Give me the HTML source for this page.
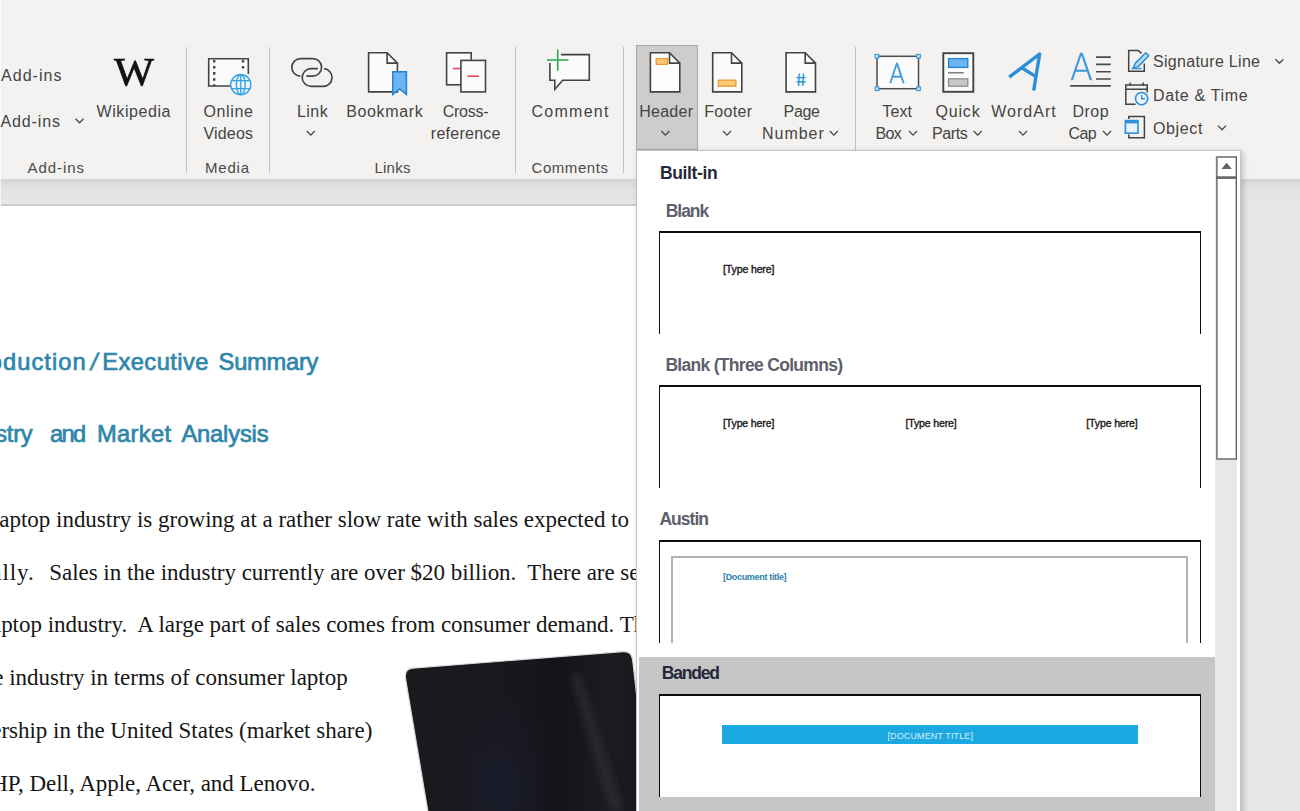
<!DOCTYPE html>
<html lang="en">
<head>
<meta charset="utf-8">
<title>Word - Insert Header</title>
<style>
html,body{margin:0;padding:0}
body{width:1300px;height:811px;overflow:hidden;background:#fff;position:relative;font-family:"Liberation Sans",Arial,sans-serif}
.t{position:absolute;white-space:pre;display:block;margin:0;padding:0;font-weight:400}
.dj{font-family:"DejaVu Sans","Liberation Sans",sans-serif;font-weight:200}
.sf{font-family:"Liberation Serif","Times New Roman",serif}
#ribbon{position:absolute;left:0;top:0;width:1300px;height:179px;background:#f3f2f1}
#ribbon .edge{position:absolute;left:0;top:0;width:1px;height:179px;background:#fbfbfb}
#rshadow{position:absolute;left:0;top:179px;width:1300px;height:27px;background:linear-gradient(#d3d3d3 0,#dcdcdc 4px,#e4e4e4 10px,#e6e6e6 24px,#e6e6e6 27px)}
#rshadow b{position:absolute;left:0;top:0;width:1px;height:27px;background:#f4f4f4}
#rshadow i{position:absolute;left:0;top:25.3px;width:1238px;height:1.7px;background:#cdcdcd}
#work{position:absolute;left:0;top:206px;width:1300px;height:605px;background:#e6e6e6}
#page{position:absolute;left:0;top:0;width:1236px;height:605px;background:#fff;overflow:hidden}
.sep{position:absolute;top:47px;width:1.4px;height:126px;background:#c3c1bf}
#hdrbtn{position:absolute;left:636px;top:45px;width:62px;height:105px;box-sizing:border-box;background:#cecdcc;border:1px solid #a9a8a7}
svg{position:absolute;left:0;top:0;overflow:visible}
#menu{position:absolute;left:636px;top:150px;width:605px;height:670px;box-sizing:border-box;background:#fff;border:1px solid #c4c4c4;box-shadow:2px 2px 6px rgba(0,0,0,.22)}
#menu .hl{position:absolute;left:1.5px;top:505.5px;width:576px;height:160px;background:#c6c6c6}
#menu .track{position:absolute;left:577.5px;top:5px;width:22.5px;height:660px;background:#e8e8e8}
.thumb{position:absolute;left:22px;width:542px;height:103px;box-sizing:border-box;background:#fff;border:1px solid #0c0c0c;border-top-width:2px;border-bottom:0}
.thumb .inner{position:absolute;left:11px;top:14px;width:517px;height:87px;box-sizing:border-box;border:2px solid #b4b4b4;border-bottom:0}
.thumb .band{position:absolute;left:62px;top:29.4px;width:416.2px;height:18.4px;background:#1ca9e1}
</style>
</head>
<body>
<div id="work"><div id="page">
<h2 class="t hd" style="left:0;top:124.5px;width:400px;height:60px"><span class="t" style="left:-49.54px;top:16.79px;font-size:23.7px;line-height:30px;letter-spacing:1.028px;color:#2f86ab;-webkit-text-stroke:0.7px #2f86ab;">Introduction</span><span class="t" style="left:89.60px;top:16.79px;font-size:23.7px;line-height:30px;letter-spacing:0.000px;color:#2f86ab;-webkit-text-stroke:0.7px #2f86ab;transform:skewX(-11deg);transform-origin:0 70%;">/</span><span class="t" style="left:102.30px;top:16.79px;font-size:23.7px;line-height:30px;letter-spacing:0.420px;color:#2f86ab;-webkit-text-stroke:0.7px #2f86ab;">Executive</span> <span class="t" style="left:218.60px;top:16.79px;font-size:23.7px;line-height:30px;letter-spacing:-0.246px;color:#2f86ab;-webkit-text-stroke:0.7px #2f86ab;">Summary</span></h2>
<h2 class="t hd" style="left:0;top:196.5px;width:400px;height:60px"><span class="t" style="left:-49.59px;top:16.79px;font-size:23.7px;line-height:30px;letter-spacing:-0.303px;color:#2f86ab;-webkit-text-stroke:0.7px #2f86ab;">Industry</span> <span class="t" style="left:49.90px;top:16.79px;font-size:23.7px;line-height:30px;letter-spacing:-1.560px;color:#2f86ab;-webkit-text-stroke:0.7px #2f86ab;">and</span> <span class="t" style="left:97.00px;top:16.79px;font-size:23.7px;line-height:30px;letter-spacing:0.359px;color:#2f86ab;-webkit-text-stroke:0.7px #2f86ab;">Market</span> <span class="t" style="left:181.40px;top:16.79px;font-size:23.7px;line-height:30px;letter-spacing:-0.146px;color:#2f86ab;-webkit-text-stroke:0.7px #2f86ab;">Analysis</span></h2>
<p class="t bd sf" style="left:-48.50px;top:298.74px;font-size:23px;line-height:29px;letter-spacing:-0.020px;color:#161616;">The laptop industry is growing at a rather slow rate with sales expected to</p>
<p class="t bd sf" style="left:-56.87px;top:351.74px;font-size:23px;line-height:29px;letter-spacing:0.880px;color:#161616;">annually.</p>
<p class="t bd sf" style="left:49.20px;top:351.74px;font-size:23px;line-height:29px;letter-spacing:-0.020px;color:#161616;">Sales in the industry currently are over $20 billion.  There are several segments</p>
<p class="t bd sf" style="left:-49.20px;top:404.04px;font-size:23px;line-height:29px;letter-spacing:-0.020px;color:#161616;">the laptop industry.  A large part of sales comes from consumer demand. The top five brands</p>
<p class="t bd sf" style="left:-24.59px;top:457.34px;font-size:23px;line-height:29px;letter-spacing:-0.020px;color:#161616;">the industry in terms of consumer laptop</p>
<p class="t bd sf" style="left:-48.36px;top:510.34px;font-size:23px;line-height:29px;letter-spacing:-0.020px;color:#161616;">ownership in the United States (market share)</p>
<p class="t bd sf" style="left:-42.55px;top:563.24px;font-size:23px;line-height:29px;letter-spacing:-0.020px;color:#161616;">are HP, Dell, Apple, Acer, and Lenovo.</p>
<svg width="1300" height="605" viewBox="0 206 1300 605" aria-label="Laptop"><defs><linearGradient id="lg" x1="0" y1="0" x2="1" y2="0"><stop offset="0" stop-color="#1b1a1e"/><stop offset=".45" stop-color="#17171d"/><stop offset=".62" stop-color="#131318"/><stop offset=".8" stop-color="#1d1b21"/><stop offset="1" stop-color="#19181c"/></linearGradient><radialGradient id="rg"><stop offset="0" stop-color="#1b1d30" stop-opacity=".75"/><stop offset="1" stop-color="#1b1d30" stop-opacity="0"/></radialGradient><filter id="bl" x="-50%" y="-20%" width="200%" height="140%"><feGaussianBlur stdDeviation="3"/></filter></defs><path d="M412.5,668.2 L623,651.6 Q631.5,651 632.6,659.5 L652,830 L431,830 L405.6,679 Q404,669 412.5,668.2 Z" fill="url(#lg)" stroke="#d9d9dc" stroke-width="1.2"/><path d="M580,672 L624,811 L610,811 L570,676 Z" fill="#302d39" opacity=".6" filter="url(#bl)"/><ellipse cx="500" cy="785" rx="55" ry="95" fill="url(#rg)"/></svg>
</div></div>
<div id="ribbon"><div class="edge"></div>
<div class="sep" style="left:185.6px"></div>
<div class="sep" style="left:268.9px"></div>
<div class="sep" style="left:515px"></div>
<div class="sep" style="left:622.9px"></div>
<div class="sep" style="left:854.8px"></div>
<div id="hdrbtn"></div>
<svg width="1300" height="180" viewBox="0 0 1300 180">
<path d="M75.5,118.7 L79.5,122.8 L83.5,118.7" fill="none" stroke="#4a4a4a" stroke-width="1.35"/>
<path d="M306.8,131.0 L310.8,135.1 L314.8,131.0" fill="none" stroke="#4a4a4a" stroke-width="1.35"/>
<path d="M661.4,131.0 L665.4,135.1 L669.4,131.0" fill="none" stroke="#4a4a4a" stroke-width="1.35"/>
<path d="M723.0,131.0 L727.0,135.1 L731.0,131.0" fill="none" stroke="#4a4a4a" stroke-width="1.35"/>
<path d="M829.8,131.0 L833.8,135.1 L837.8,131.0" fill="none" stroke="#4a4a4a" stroke-width="1.35"/>
<path d="M909.0,131.0 L913.0,135.1 L917.0,131.0" fill="none" stroke="#4a4a4a" stroke-width="1.35"/>
<path d="M973.7,131.0 L977.7,135.1 L981.7,131.0" fill="none" stroke="#4a4a4a" stroke-width="1.35"/>
<path d="M1019.0,131.0 L1023.0,135.1 L1027.0,131.0" fill="none" stroke="#4a4a4a" stroke-width="1.35"/>
<path d="M1103.0,131.0 L1107.0,135.1 L1111.0,131.0" fill="none" stroke="#4a4a4a" stroke-width="1.35"/>
<path d="M1275.4,59.2 L1279.4,63.3 L1283.4,59.2" fill="none" stroke="#4a4a4a" stroke-width="1.35"/>
<path d="M1218.0,125.6 L1222.0,129.7 L1226.0,125.6" fill="none" stroke="#4a4a4a" stroke-width="1.35"/>
<path d="M232,86 H208.7 V58.7 H248.3 V74" fill="#fbfbfb" stroke="#434343" stroke-width="1.6"/>
<path d="M214.2,58.7 V86" stroke="#434343" stroke-width="2.4" stroke-dasharray="2.6 3.5" stroke-dashoffset="-1.2" fill="none"/>
<path d="M243,58.7 V72" stroke="#434343" stroke-width="2.4" stroke-dasharray="2.6 3.5" stroke-dashoffset="-1.2" fill="none"/>
<g fill="none" stroke="#37a2e2" stroke-width="1.35"><circle cx="240.8" cy="84.6" r="10.1" fill="#e9f5fd"/><ellipse cx="240.8" cy="84.6" rx="4.4" ry="10"/><path d="M240.8,74.6 V94.6 M231.6,80.6 H250 M231.6,88.6 H250"/></g>
<g fill="none" stroke="#434343" stroke-width="1.6"><path d="M300.4,76.1 A8.75,8.75 0 0 1 300.65,58.6 H312.85 A8.75,8.75 0 0 1 312.85,76.1 H306.4"/><path d="M317.9,68.6 H311.1 A8.9,8.9 0 0 0 311.1,86.4 H323.3 A8.9,8.9 0 0 0 324.1,68.65"/></g>
<path d="M368.6,52.8 H387.09999999999997 L397.4,63.099999999999994 V91.9 H368.6 Z" fill="#fbfbfb" stroke="#434343" stroke-width="1.6" stroke-linejoin="miter"/><path d="M387.09999999999997,52.8 V63.099999999999994 H397.4" fill="none" stroke="#434343" stroke-width="1.6"/>
<path d="M392.8,71.8 H406.4 V94.4 L399.6,89 L392.8,94.4 Z" fill="#6db5f2" stroke="#1f82d4" stroke-width="1.5"/>
<rect x="446.6" y="52.8" width="24.6" height="32" fill="#fbfbfb" stroke="#434343" stroke-width="1.6"/>
<path d="M452.8,68.5 H460" stroke="#dc4b68" stroke-width="1.6"/>
<rect x="460.9" y="60.4" width="24.6" height="31.5" fill="#fbfbfb" stroke="#434343" stroke-width="1.6"/>
<path d="M467.4,76.2 H479" stroke="#dc4b68" stroke-width="1.6"/>
<path d="M561,54.6 H589.3 V80.3 H562.6 L554.8,89.4 V80.3 H549.9 V63" fill="#fbfbfb" stroke="#434343" stroke-width="1.6"/>
<path d="M547,60 H568.5 M557.7,49.5 V70.8" stroke="#2fa853" stroke-width="1.6" fill="none"/>
<path d="M650.4,52.8 H669.5 L679.8,63.099999999999994 V91.9 H650.4 Z" fill="#fdfdfd" stroke="#434343" stroke-width="1.6" stroke-linejoin="miter"/><path d="M669.5,52.8 V63.099999999999994 H679.8" fill="none" stroke="#434343" stroke-width="1.6"/>
<rect x="656.2" y="58.6" width="11.3" height="5.8" fill="#fbc976" stroke="#ea9a35" stroke-width="1.3"/>
<path d="M712.7,52.8 H731.5 L741.8,63.099999999999994 V91.9 H712.7 Z" fill="#fbfbfb" stroke="#434343" stroke-width="1.6" stroke-linejoin="miter"/><path d="M731.5,52.8 V63.099999999999994 H741.8" fill="none" stroke="#434343" stroke-width="1.6"/>
<rect x="718.3" y="80.2" width="17.6" height="6" fill="#fbc976" stroke="#ea9a35" stroke-width="1.3"/>
<path d="M786.1,52.8 H805.2 L815.5,63.099999999999994 V91.9 H786.1 Z" fill="#fbfbfb" stroke="#434343" stroke-width="1.6" stroke-linejoin="miter"/><path d="M805.2,52.8 V63.099999999999994 H815.5" fill="none" stroke="#434343" stroke-width="1.6"/>
<rect x="877" y="56.3" width="41.5" height="32.4" fill="#fbfbfb" stroke="#4c4c4c" stroke-width="1.5"/>
<rect x="875.2" y="54.5" width="3.6" height="3.6" fill="#cfe8fb" stroke="#3a97dc" stroke-width="1.2"/>
<rect x="916.7" y="54.5" width="3.6" height="3.6" fill="#cfe8fb" stroke="#3a97dc" stroke-width="1.2"/>
<rect x="875.2" y="86.9" width="3.6" height="3.6" fill="#cfe8fb" stroke="#3a97dc" stroke-width="1.2"/>
<rect x="916.7" y="86.9" width="3.6" height="3.6" fill="#cfe8fb" stroke="#3a97dc" stroke-width="1.2"/>
<rect x="943.3" y="53.2" width="30" height="38.6" fill="#fbfbfb" stroke="#434343" stroke-width="1.9"/>
<rect x="948.6" y="58.6" width="19.2" height="8.8" fill="#6db5f2" stroke="#1f82d4" stroke-width="1.3"/>
<path d="M948,72.8 H963.8" stroke="#6a6a6a" stroke-width="1.3"/>
<rect x="948.6" y="78.8" width="19.2" height="7.4" fill="#c9c9c9" stroke="#8c8c8c" stroke-width="1.3"/>
<path d="M1009.2,77.2 L1039.6,54 L1033.7,90.6 M1021.6,67.8 L1036,76.6" fill="none" stroke="#2b8fd6" stroke-width="3.4" stroke-linecap="butt" stroke-linejoin="round"/>
<path d="M1096,57.1 H1110.8 M1096,64.4 H1110.8 M1096,71.8 H1110.8 M1096,79 H1110.8 M1070.2,85.9 H1110.8" stroke="#4a4a4a" stroke-width="1.6" fill="none"/>
<path d="M1144.3,63.5 V71.3 H1128.7 V50.4 H1138.2 L1141.4,53.4" fill="none" stroke="#434343" stroke-width="1.5"/>
<path d="M1145.8,52.8 L1148.8,55.8 L1138.4,66.4 L1133.2,68.4 L1135.2,63.4 Z" fill="#bcdcf6" stroke="#2b8fd6" stroke-width="1.5" stroke-linejoin="round"/>
<path d="M1131.4,68.5 H1141.6" stroke="#2b8fd6" stroke-width="1.4"/>
<path d="M1135.6,104.2 H1125.8 V85 H1147.2 V92.4" fill="none" stroke="#434343" stroke-width="1.5"/><path d="M1125.8,89.3 H1147.2 M1130.2,82.6 V86 M1143.2,82.6 V86" stroke="#434343" stroke-width="1.5" fill="none"/>
<circle cx="1141.6" cy="98.6" r="6.1" fill="#f1f8fd" stroke="#2b8fd6" stroke-width="1.6"/><path d="M1141.6,95 V98.8 H1144.8" fill="none" stroke="#2b8fd6" stroke-width="1.4"/>
<path d="M1128.8,119 V116.6 H1144.4 V137.8 H1128.8 V134.4" fill="none" stroke="#434343" stroke-width="1.5"/>
<rect x="1125.4" y="120.6" width="12.6" height="12.6" fill="#e6f2fc" stroke="#2b8fd6" stroke-width="1.6"/><path d="M1125.4,122.2 H1138" stroke="#2b8fd6" stroke-width="2.3"/>
</svg>
<span class="t" style="left:1.00px;top:65.86px;font-size:16px;line-height:20px;letter-spacing:1.043px;color:#444;">Add-ins</span>
<span class="t" style="left:0.50px;top:112.06px;font-size:16px;line-height:20px;letter-spacing:0.877px;color:#444;">Add-ins</span>
<span class="t sf" style="left:113.50px;top:47.04px;font-size:39.6px;line-height:50px;letter-spacing:0.000px;color:#111;transform:scaleX(1.07);transform-origin:0 0;-webkit-text-stroke:.7px #111;">W</span>
<span class="t" style="left:96.50px;top:101.56px;font-size:16px;line-height:20px;letter-spacing:0.575px;color:#444;">Wikipedia</span>
<span class="t" style="left:27.50px;top:157.90px;font-size:15px;line-height:19px;letter-spacing:0.942px;color:#4a4a4a;">Add-ins</span>
<span class="t" style="left:205.00px;top:157.90px;font-size:15px;line-height:19px;letter-spacing:0.781px;color:#4a4a4a;">Media</span>
<span class="t" style="left:374.50px;top:157.90px;font-size:15px;line-height:19px;letter-spacing:0.219px;color:#4a4a4a;">Links</span>
<span class="t" style="left:531.50px;top:157.90px;font-size:15px;line-height:19px;letter-spacing:0.568px;color:#4a4a4a;">Comments</span>
<span class="t" style="left:203.40px;top:101.56px;font-size:16px;line-height:20px;letter-spacing:0.672px;color:#444;">Online</span>
<span class="t" style="left:203.50px;top:124.26px;font-size:16px;line-height:20px;letter-spacing:0.172px;color:#444;">Videos</span>
<span class="t" style="left:297.00px;top:101.56px;font-size:16px;line-height:20px;letter-spacing:0.433px;color:#444;">Link</span>
<span class="t" style="left:346.20px;top:101.56px;font-size:16px;line-height:20px;letter-spacing:0.646px;color:#444;">Bookmark</span>
<span class="t" style="left:442.80px;top:101.56px;font-size:16px;line-height:20px;letter-spacing:-0.284px;color:#444;">Cross-</span>
<span class="t" style="left:430.80px;top:124.26px;font-size:16px;line-height:20px;letter-spacing:0.262px;color:#444;">reference</span>
<span class="t" style="left:531.50px;top:101.56px;font-size:16px;line-height:20px;letter-spacing:1.273px;color:#444;">Comment</span>
<span class="t" style="left:639.20px;top:101.56px;font-size:16px;line-height:20px;letter-spacing:0.264px;color:#444;">Header</span>
<span class="t" style="left:704.20px;top:101.56px;font-size:16px;line-height:20px;letter-spacing:0.312px;color:#444;">Footer</span>
<span class="t" style="left:783.50px;top:101.56px;font-size:16px;line-height:20px;letter-spacing:-0.287px;color:#444;">Page</span>
<span class="t" style="left:762.00px;top:124.26px;font-size:16px;line-height:20px;letter-spacing:0.976px;color:#444;">Number</span>
<span class="t" style="left:795.60px;top:68.29px;font-size:18.5px;line-height:23px;letter-spacing:0.000px;color:#2f93da;font-weight:700;transform:skewX(9deg);transform-origin:50% 60%;">#</span>
<span class="t" style="left:882.30px;top:101.56px;font-size:16px;line-height:20px;letter-spacing:0.113px;color:#444;">Text</span>
<span class="t" style="left:875.40px;top:124.26px;font-size:16px;line-height:20px;letter-spacing:-0.580px;color:#444;">Box</span>
<span class="t dj" style="left:889.40px;top:56.80px;font-size:26.6px;line-height:33px;letter-spacing:0.000px;color:#3a97dc;transform:scaleX(0.88);transform-origin:0 0;-webkit-text-stroke:.5px #3a97dc;">A</span>
<span class="t" style="left:935.40px;top:101.56px;font-size:16px;line-height:20px;letter-spacing:0.845px;color:#444;">Quick</span>
<span class="t" style="left:932.00px;top:124.26px;font-size:16px;line-height:20px;letter-spacing:-0.415px;color:#444;">Parts</span>
<span class="t" style="left:991.20px;top:101.56px;font-size:16px;line-height:20px;letter-spacing:1.033px;color:#444;">WordArt</span>
<span class="t dj" style="left:1070.40px;top:43.79px;font-size:37.3px;line-height:47px;letter-spacing:0.000px;color:#3a97dc;transform:scaleX(0.9);transform-origin:0 0;-webkit-text-stroke:.45px #3a97dc;">A</span>
<span class="t" style="left:1072.60px;top:101.56px;font-size:16px;line-height:20px;letter-spacing:0.440px;color:#444;">Drop</span>
<span class="t" style="left:1068.60px;top:124.26px;font-size:16px;line-height:20px;letter-spacing:-0.680px;color:#444;">Cap</span>
<span class="t" style="left:1153.00px;top:52.46px;font-size:16px;line-height:20px;letter-spacing:0.292px;color:#444;">Signature Line</span>
<span class="t" style="left:1153.00px;top:85.66px;font-size:16px;line-height:20px;letter-spacing:0.656px;color:#444;">Date &amp; Time</span>
<span class="t" style="left:1153.00px;top:118.66px;font-size:16px;line-height:20px;letter-spacing:0.632px;color:#444;">Object</span>
</div>
<div id="rshadow"><i></i><b></b></div>
<div id="menu"><div class="hl"></div><div class="track"></div>
<svg class="sb" width="30" height="320" style="left:573.0px;top:-1.0px" viewBox="1210 150 30 320"><rect x="1216.9" y="157" width="19.4" height="302" fill="#fff" stroke="#646464" stroke-width="1.4"/><path d="M1216.2,177.6 H1237" stroke="#646464" stroke-width="2.6"/><path d="M1221.4,169 L1226.6,162.8 L1231.8,169 Z" fill="#636363"/></svg>
<span class="t" style="left:23.00px;top:10.94px;font-size:17.5px;line-height:22px;letter-spacing:-0.363px;color:#27273a;font-weight:700;">Built-in</span>
<span class="t" style="left:28.80px;top:48.64px;font-size:17.5px;line-height:22px;letter-spacing:-1.072px;color:#5e5e6c;font-weight:700;">Blank</span>
<div class="thumb" style="top:80.0px"><span class="t" style="left:63.00px;top:30.06px;font-size:10.5px;line-height:13px;letter-spacing:-0.113px;color:#1c1c1c;-webkit-text-stroke:.4px #1c1c1c;">[Type here]</span></div>
<span class="t" style="left:28.40px;top:203.44px;font-size:17.5px;line-height:22px;letter-spacing:-0.697px;color:#5e5e6c;font-weight:700;">Blank (Three Columns)</span>
<div class="thumb" style="top:234.0px"><span class="t" style="left:63.00px;top:30.26px;font-size:10.5px;line-height:13px;letter-spacing:-0.123px;color:#1c1c1c;-webkit-text-stroke:.4px #1c1c1c;">[Type here]</span><span class="t" style="left:245.40px;top:30.26px;font-size:10.5px;line-height:13px;letter-spacing:-0.123px;color:#1c1c1c;-webkit-text-stroke:.4px #1c1c1c;">[Type here]</span><span class="t" style="left:426.30px;top:30.26px;font-size:10.5px;line-height:13px;letter-spacing:-0.123px;color:#1c1c1c;-webkit-text-stroke:.4px #1c1c1c;">[Type here]</span></div>
<span class="t" style="left:22.40px;top:357.04px;font-size:17.5px;line-height:22px;letter-spacing:-0.965px;color:#5e5e6c;font-weight:700;">Austin</span>
<div class="thumb" style="top:389.0px"><div class="inner"></div><span class="t" style="left:63.00px;top:30.38px;font-size:9px;line-height:11px;letter-spacing:-0.326px;color:#2c82a8;font-weight:700;">[Document title]</span></div>
<span class="t" style="left:24.70px;top:511.44px;font-size:17.5px;line-height:22px;letter-spacing:-1.176px;color:#27273a;font-weight:700;">Banded</span>
<div class="thumb" style="top:543.0px"><div class="band"></div><span class="t" style="left:227.40px;top:34.58px;font-size:9px;line-height:11px;letter-spacing:0.128px;color:#d4ecf8;">[DOCUMENT TITLE]</span></div>
</div>
</body>
</html>
